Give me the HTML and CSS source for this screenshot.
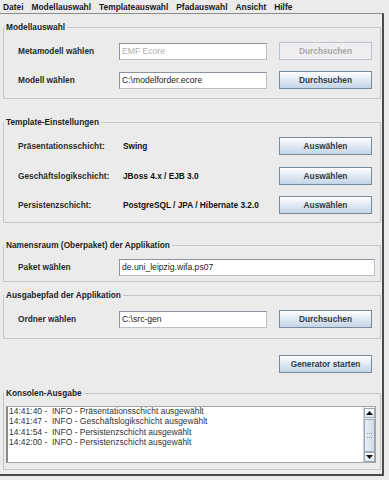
FILE: index.html
```html
<!DOCTYPE html>
<html lang="de">
  <head>
    <meta charset="UTF-8" />
    <meta name="viewport" content="width=device-width, initial-scale=1.0" />
    <title>Generator</title>
    <link rel="stylesheet" href="styles.css">
  </head>
  <body>
    <div class="menubar">
      <span class="menu">Datei</span>
      <span class="menu">Modellauswahl</span>
      <span class="menu">Templateauswahl</span>
      <span class="menu">Pfadauswahl</span>
      <span class="menu">Ansicht</span>
      <span class="menu">Hilfe</span>
    </div>

    <div class="window">
      <fieldset class="panel panel-model">
        <legend>Modellauswahl</legend>
        <div class="rows">
          <div class="row">
            <span class="label">Metamodell wählen</span>
            <span class="field disabled">EMF Ecore</span>
            <button type="button" class="btn" disabled>Durchsuchen</button>
          </div>
          <div class="row">
            <span class="label">Modell wählen</span>
            <span class="field">C:\modelforder.ecore</span>
            <button type="button" class="btn">Durchsuchen</button>
          </div>
        </div>
      </fieldset>

      <fieldset class="panel panel-template">
        <legend>Template-Einstellungen</legend>
        <div class="rows rows-template">
          <div class="row">
            <span class="label">Präsentationsschicht:</span>
            <span class="value">Swing</span>
            <button type="button" class="btn">Auswählen</button>
          </div>
          <div class="row">
            <span class="label">Geschäftslogikschicht:</span>
            <span class="value">JBoss 4.x / EJB 3.0</span>
            <button type="button" class="btn">Auswählen</button>
          </div>
          <div class="row">
            <span class="label">Persistenzschicht:</span>
            <span class="value">PostgreSQL / JPA / Hibernate 3.2.0</span>
            <button type="button" class="btn">Auswählen</button>
          </div>
        </div>
      </fieldset>

      <fieldset class="panel panel-package">
        <legend>Namensraum (Oberpaket) der Applikation</legend>
        <div class="rows rows-package">
          <div class="row">
            <span class="label">Paket wählen</span>
            <span class="field wide">de.uni_leipzig.wifa.ps07</span>
          </div>
        </div>
      </fieldset>

      <fieldset class="panel panel-output">
        <legend>Ausgabepfad der Applikation</legend>
        <div class="rows rows-output">
          <div class="row">
            <span class="label">Ordner wählen</span>
            <span class="field">C:\src-gen</span>
            <button type="button" class="btn">Durchsuchen</button>
          </div>
        </div>
      </fieldset>

      <div class="actions">
        <button type="button" class="btn">Generator starten</button>
      </div>

      <fieldset class="panel panel-console">
        <legend>Konsolen-Ausgabe</legend>
        <div class="console">
          <div class="log">14:41:40 -  INFO - Präsentationsschicht ausgewählt
14:41:47 -  INFO - Geschäftslogikschicht ausgewählt
14:41:54 -  INFO - Persistenzschicht ausgewählt
14:42:00 -  INFO - Persistenzschicht ausgewählt</div>
          <div class="scrollbar">
            <span class="arrow">
              <svg width="7" height="4" viewBox="0 0 7 4"><path d="M0 4 L3.5 0 L7 4 Z" fill="#111"/></svg>
            </span>
            <span class="track">
              <span class="thumb"><span class="grip"></span></span>
            </span>
            <span class="arrow">
              <svg width="7" height="4" viewBox="0 0 7 4"><path d="M0 0 L3.5 4 L7 0 Z" fill="#111"/></svg>
            </span>
          </div>
        </div>
      </fieldset>
    </div>
  </body>
</html>
```

FILE: styles.css
```css
body {
  margin: 0;
  background-color: #ebebeb;
  font-family: "Liberation Sans", Arial, sans-serif;
  color: #222;
}
.menubar {
  display: flex;
  gap: 8px;
  height: 13px;
  padding-left: 3px;
  align-items: center;
  font-size: 8.4px;
  font-weight: bold;
  color: #1a1a1a;
}
.window {
  width: 384px;
  height: 463px;
  border-top: 1px solid #8c8c8c;
  border-right: 2px solid #4a4a4a;
  border-bottom: 2px solid #4a4a4a;
  padding-top: 8px;
  box-sizing: border-box;
}
.panel {
  margin: 0 0 0 3px;
  width: 378px;
  min-width: 0;
  box-sizing: border-box;
  border: 1px solid #c6c6c6;
  padding: 0;
}
.panel legend {
  padding: 0 2px;
  font-size: 8.3px;
  line-height: 10px;
  font-weight: bold;
  color: #1e1e1e;
}
.panel-template {
  margin-top: 18px;
}
.panel-package {
  margin-top: 17px;
}
.panel-output {
  margin-top: 8px;
}
.panel-console {
  margin-top: 15px;
}
.rows {
  display: flex;
  flex-direction: column;
  gap: 11px;
  padding: 10px 0 9px;
}
.rows-template {
  gap: 11.5px;
  padding-bottom: 8px;
}
.rows-package {
  padding: 8px 0 5px;
}
.rows-output {
  padding: 10px 0 10px;
}
.row {
  display: flex;
  align-items: center;
  height: 18px;
  padding-left: 14px;
  font-size: 8.3px;
  font-weight: bold;
}
.label {
  width: 101px;
  color: #2a2a2a;
}
.value {
  width: 144px;
  padding-left: 4px;
  color: #111;
  white-space: nowrap;
}
.field {
  width: 148px;
  height: 17px;
  box-sizing: border-box;
  background-color: #fff;
  border: 1px solid #8a949e;
  border-right-color: #b9c0c7;
  border-bottom-color: #b9c0c7;
  padding-left: 2px;
  font-size: 8.6px;
  font-weight: normal;
  line-height: 15px;
  color: #222;
  white-space: nowrap;
  overflow: hidden;
}
.field.wide {
  width: 256px;
}
.field.disabled {
  color: #b0b0b0;
}
.btn {
  width: 93px;
  height: 18px;
  margin: 0 0 0 12px;
  padding: 0;
  box-sizing: border-box;
  border: 1px solid #7a8a99;
  background: linear-gradient(#ffffff, #dce7f2 55%, #c3d5e7);
  font-family: "Liberation Sans", Arial, sans-serif;
  font-size: 8.3px;
  font-weight: bold;
  color: #333a44;
}
.btn:disabled {
  border-color: #b8c4cf;
  background: #eeeeee;
  color: #a8a8a8;
}
.actions {
  display: flex;
  justify-content: flex-end;
  padding-right: 10px;
  margin-top: 16px;
}
.console {
  display: flex;
  width: 370px;
  height: 57px;
  margin: 8px 0 6px 2px;
  box-sizing: border-box;
  background-color: #fff;
  border: 1px solid #a4a4a4;
  border-left: 2px solid #8a8a8a;
}
.log {
  flex: 1;
  overflow: hidden;
  padding: 0 0 0 1px;
  margin-top: -1px;
  white-space: pre;
  font-size: 8.5px;
  line-height: 10.3px;
  color: #333;
}
.scrollbar {
  display: flex;
  flex-direction: column;
  width: 11px;
  background-color: #f2f4f6;
  border-left: 1px solid #c8d0d8;
  padding-top: 1px;
}
.arrow {
  display: flex;
  align-items: center;
  justify-content: center;
  height: 10px;
  border: 1px solid #9aa8b6;
  background: linear-gradient(#ffffff, #dfe8f1);
  box-sizing: border-box;
}
.track {
  flex: 1;
  display: flex;
  flex-direction: column;
  padding-top: 1px;
}
.thumb {
  flex: 1;
  display: flex;
  align-items: center;
  justify-content: center;
  border: 1px solid #9aa8b6;
  background: linear-gradient(90deg, #e8eff6, #cfdcea);
}
.grip {
  width: 5px;
  height: 3px;
  border-top: 1px dotted #8595a5;
  border-bottom: 1px dotted #8595a5;
}
```
